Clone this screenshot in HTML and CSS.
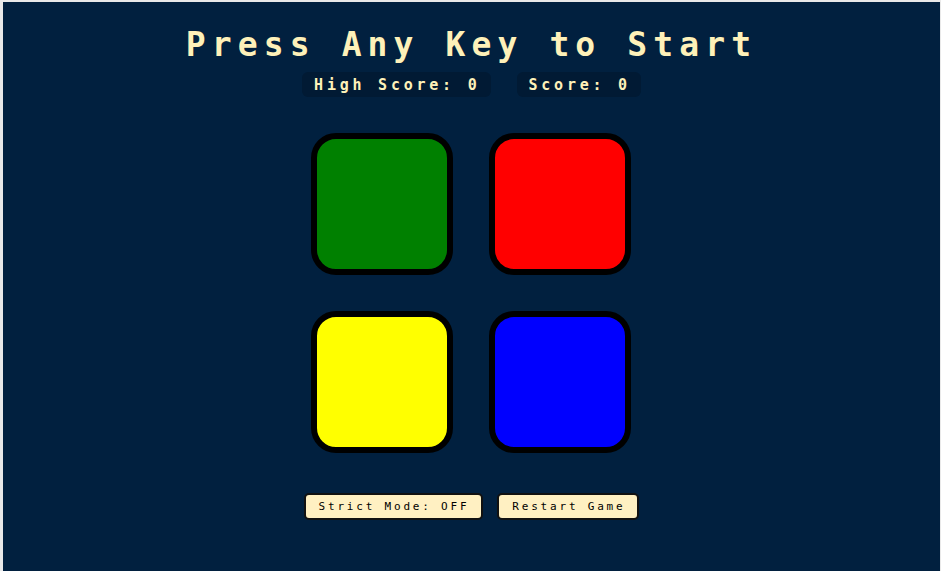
FILE: index.html
```html
<!DOCTYPE html>
<html lang="en">
<head>
<meta charset="utf-8">
<title>Simon Game</title>
<link rel="stylesheet" href="styles.css">
</head>
<body>
<main class="game">
  <h1 class="title">Press Any Key to Start</h1>
  <div class="scores">
    <div class="score-box">High Score: 0</div>
    <div class="score-box score-box--current">Score: 0</div>
  </div>
  <div class="board">
    <div class="pad pad--green"></div>
    <div class="pad pad--red"></div>
    <div class="pad pad--yellow"></div>
    <div class="pad pad--blue"></div>
  </div>
  <div class="controls">
    <button class="btn">Strict Mode: OFF</button>
    <button class="btn">Restart Game</button>
  </div>
</main>
</body>
</html>
```

FILE: styles.css
```css
html {
  background: #e9e9e9;
}

body {
  margin: 2px 1px 0 3px;
  min-height: 569px;
  background: #01203f;
  font-family: "DejaVu Sans Mono", "Liberation Mono", monospace;
}

.game {
  display: flex;
  flex-direction: column;
  align-items: center;
}

.title {
  margin: 23px 0 0 0;
  font-size: 33px;
  line-height: 40px;
  font-weight: bold;
  letter-spacing: 6.1px;
  color: #fef1b9;
  white-space: nowrap;
}

.scores {
  display: flex;
  gap: 26px;
  margin-top: 7px;
}

.score-box {
  height: 25px;
  display: flex;
  align-items: center;
  padding: 0 10px 0 12px;
  background: #011a34;
  border-radius: 6px;
  color: #fef1b9;
  font-size: 15px;
  font-weight: bold;
  letter-spacing: 3.77px;
  white-space: nowrap;
}

.board {
  display: grid;
  grid-template-columns: 142px 142px;
  grid-auto-rows: 142px;
  gap: 36px;
  margin: 36px 2px 0 0;
}

.pad {
  box-sizing: border-box;
  border: 6px solid #000;
  border-radius: 25px;
}

.pad--green { background: #008000; }
.pad--red { background: #ff0000; }
.pad--yellow { background: #ffff00; }
.pad--blue { background: #0000ff; }

.controls {
  display: flex;
  gap: 14px;
  margin: 40px 0 0 0;
}

.btn {
  height: 27px;
  box-sizing: border-box;
  padding: 0 12px 0 13px;
  background: #fff0c2;
  border: 2px solid #111;
  border-radius: 5px;
  color: #000;
  font-family: "DejaVu Sans Mono", "Liberation Mono", monospace;
  font-size: 11px;
  font-weight: normal;
  letter-spacing: 2.8px;
  white-space: nowrap;
}
```
